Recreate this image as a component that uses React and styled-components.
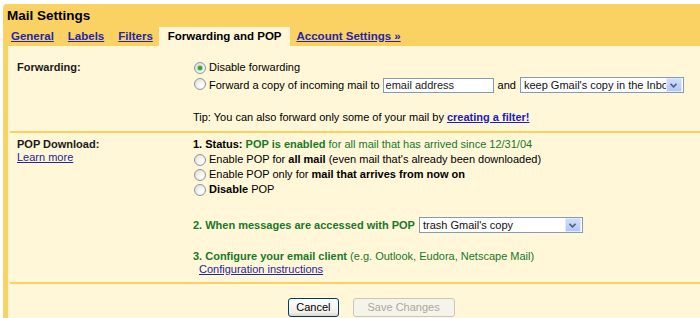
import React from 'react'
import styled, { createGlobalStyle } from 'styled-components'

const GlobalStyle = createGlobalStyle`
   body {
      margin: 0;
      background: #ffffff;
      overflow: hidden;
      font-family: 'Liberation Sans', Arial, sans-serif;
   }
`

const App = () => {
   return (
      <>
         <GlobalStyle />
         <Panel>
            <Header>
               <Title>Mail Settings</Title>
               <Tabs>
                  <TabLink>General</TabLink>
                  <TabLink>Labels</TabLink>
                  <TabLink>Filters</TabLink>
                  <ActiveTab>Forwarding and POP</ActiveTab>
                  <TabLink>Account Settings »</TabLink>
               </Tabs>
            </Header>
            <Content>
               <Section $top={14} $bottom={6}>
                  <LabelCol>
                     <Label>Forwarding:</Label>
                  </LabelCol>
                  <ValueCol>
                     <OptionRow>
                        <Radio $checked />
                        <span>Disable forwarding</span>
                     </OptionRow>
                     <OptionRow $mt={2}>
                        <Radio $raised />
                        <span>Forward a copy of incoming mail to</span>
                        <TextInput readOnly value="email address" />
                        <span>and</span>
                        <Dropdown $w={164}>
                           <DropText>keep Gmail's copy in the Inbox</DropText>
                           <DropArrow />
                        </Dropdown>
                     </OptionRow>
                     <Line $mt={17}>
                        Tip: You can also forward only some of your mail by <BoldLink>creating a filter!</BoldLink>
                     </Line>
                  </ValueCol>
               </Section>
               <Section $top={4} $bottom={6}>
                  <LabelCol>
                     <Label>POP Download:</Label>
                     <Link>Learn more</Link>
                  </LabelCol>
                  <ValueCol>
                     <Line>
                        <b>1. Status: </b>
                        <Green><b>POP is enabled</b> for all mail that has arrived since 12/31/04</Green>
                     </Line>
                     <OptionRow>
                        <Radio />
                        <span>Enable POP for <b>all mail</b> (even mail that's already been downloaded)</span>
                     </OptionRow>
                     <OptionRow>
                        <Radio />
                        <span>Enable POP only for <b>mail that arrives from now on</b></span>
                     </OptionRow>
                     <OptionRow>
                        <Radio />
                        <span><b>Disable</b> POP</span>
                     </OptionRow>
                     <OptionRow $mt={20}>
                        <Green><b>2. When messages are accessed with POP</b></Green>
                        <Dropdown $w={164}>
                           <DropText>trash Gmail's copy</DropText>
                           <DropArrow />
                        </Dropdown>
                     </OptionRow>
                     <Step>
                        <Green><b>3. Configure your email client</b> (e.g. Outlook, Eudora, Netscape Mail)</Green>
                        <br />
                        <IndentLink>Configuration instructions</IndentLink>
                     </Step>
                  </ValueCol>
               </Section>
               <ButtonBar>
                  <Button>Cancel</Button>
                  <Button disabled>Save Changes</Button>
               </ButtonBar>
            </Content>
         </Panel>
      </>
   )
}

const DropArrow = () => (
   <ArrowBox>
      <svg width="7" height="5" viewBox="0 0 7 5">
         <path d="M0.5 0.8 L3.5 3.8 L6.5 0.8" fill="none" stroke="#4d6185" strokeWidth="1.6" />
      </svg>
   </ArrowBox>
)

export default App

const Panel = styled.div`
   width: 732px;
   margin: 4px 0 0 3px;
   font-size: 11px;
   color: #000;
`

const Header = styled.div`
   background: #fad163;
   border-top-left-radius: 4px;
   padding: 3px 0 0 4px;
`

const Title = styled.div`
   font-size: 13.5px;
   font-weight: bold;
   line-height: 18px;
   margin-bottom: 2px;
`

const Tabs = styled.div`
   display: flex;
   margin-left: -3px;
   font-size: 11.5px;
   font-weight: bold;
   line-height: 19px;
`

const TabLink = styled.span`
   padding: 0 7px;
   color: #2626a6;
   text-decoration: underline;
`

const ActiveTab = styled.span`
   padding: 0 8px 0 9px;
   margin-left: -1px;
   background: #fff7d7;
   color: #000;
`

const Content = styled.div`
   border-left: 5px solid #fad163;
   background: #fff7d7;
   padding-bottom: 10px;
`

const Section = styled.div`
   display: grid;
   grid-template-columns: 176px 1fr;
   margin-left: 2px;
   padding: ${p => p.$top}px 0 ${p => p.$bottom}px 7px;
   border-bottom: 2px solid #fad163;
   line-height: 15px;
`

const LabelCol = styled.div`
   display: flex;
   flex-direction: column;
   align-items: flex-start;
   padding-top: 1px;
   line-height: 13px;
`

const Label = styled.span`
   font-weight: bold;
   color: #1a1a1a;
`

const Link = styled.span`
   color: #25259a;
   text-decoration: underline;
`

const IndentLink = styled(Link)`
   margin-left: 6px;
`

const BoldLink = styled.span`
   color: #2020c0;
   font-weight: bold;
   text-decoration: underline;
`

const ValueCol = styled.div`
   display: flex;
   flex-direction: column;
   align-items: flex-start;
`

const OptionRow = styled.div`
   display: flex;
   align-items: center;
   gap: 3px;
   min-height: 15px;
   margin-top: ${p => p.$mt || 0}px;
`

const Radio = styled.span`
   position: relative;
   flex: none;
   width: 10px;
   height: 10px;
   margin: 0 0 0 1px;
   border: 1px solid #8896a6;
   border-radius: 50%;
   background: radial-gradient(circle at 65% 65%, #ffffff 0%, #f4f3ee 40%, #d9d7cc 100%);
   align-self: ${p => (p.$raised ? 'flex-start' : 'center')};
   margin-top: ${p => (p.$raised ? 1 : 0)}px;

   &::after {
      content: '';
      display: ${p => (p.$checked ? 'block' : 'none')};
      position: absolute;
      left: 3px;
      top: 3px;
      width: 4px;
      height: 4px;
      border-radius: 50%;
      background: #2ba12b;
      box-shadow: 0 0 1px 1px #8fd18f;
   }
`

const TextInput = styled.input`
   width: 111px;
   height: 15px;
   box-sizing: border-box;
   margin: 0 1px 0 0;
   padding: 0 2px;
   border: 1px solid #7f9db9;
   background: #fff;
   font-family: 'Liberation Sans', Arial, sans-serif;
   font-size: 11px;
   color: #222;
   outline: none;
`

const Dropdown = styled.div`
   display: flex;
   align-items: center;
   width: ${p => p.$w}px;
   height: 16px;
   box-sizing: border-box;
   margin-left: 1px;
   border: 1px solid #7f9db9;
   background: #fff;
   overflow: hidden;
`

const DropText = styled.span`
   flex: 1;
   padding-left: 3px;
   white-space: nowrap;
   overflow: hidden;
   color: #111;
`

const ArrowBox = styled.span`
   display: flex;
   align-items: center;
   justify-content: center;
   flex: none;
   width: 14px;
   height: 12px;
   margin-right: 1px;
   border: 1px solid #e2eafc;
   border-radius: 1px;
   background: linear-gradient(#d0ddfb, #b2c6f6);
`

const Line = styled.div`
   margin-top: ${p => p.$mt || 0}px;
   white-space: nowrap;
`

const Green = styled.span`
   color: #18782a;
`

const Step = styled.div`
   margin-top: 17px;
   line-height: 13px;
`

const ButtonBar = styled.div`
   display: flex;
   justify-content: center;
   gap: 14px;
   padding-top: 14px;
`

const Button = styled.button`
   height: 19px;
   padding: 0 ${p => (p.disabled ? 14 : 7)}px;
   border-radius: 3px;
   border: 1px solid ${p => (p.disabled ? '#c9c7ba' : '#003c74')};
   background: ${p => (p.disabled ? '#f5f4ea' : 'linear-gradient(#ffffff, #f0efe9 80%, #d8d3c7)')};
   color: ${p => (p.disabled ? '#aca899' : '#000')};
   font-family: 'Liberation Sans', Arial, sans-serif;
   font-size: 11px;
   line-height: 17px;
`
